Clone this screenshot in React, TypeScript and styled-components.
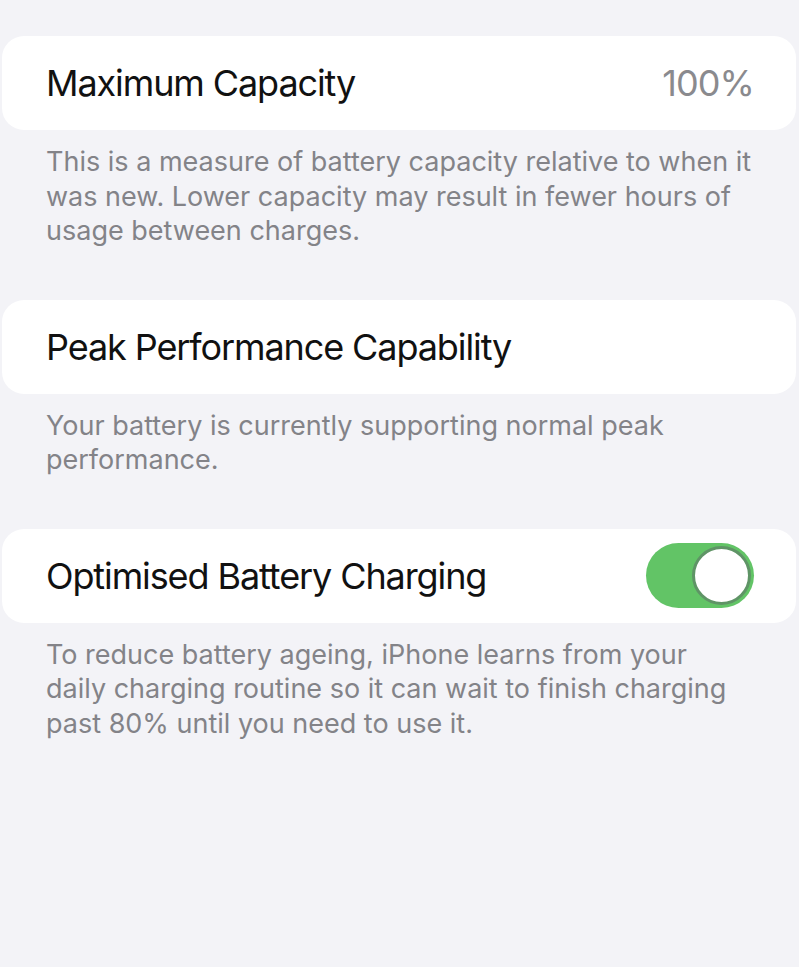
import styled, {createGlobalStyle} from "styled-components";
import {FC, ReactNode, useState} from "react";

const GlobalStyle = createGlobalStyle`
  html, body {
    margin: 0;
    padding: 0;
    background: #f3f3f7;
  }
  body {
    font-family: Inter, "Noto Sans", "Liberation Sans", sans-serif;
    -webkit-font-smoothing: antialiased;
  }
`

type SectionProps = { title: string, footer: string, children?: ReactNode }

const Section: FC<SectionProps> = ({title, footer, children}) => (
    <SectionWrapper>
        <Card>
            <Title>{title}</Title>
            {children}
        </Card>
        <Footer>{footer}</Footer>
    </SectionWrapper>
)

const Toggle: FC<{ on: boolean, onChange: (value: boolean) => void }> = ({on, onChange}) => (
    <Track on={on} onClick={() => onChange(!on)}>
        <Knob on={on}/>
    </Track>
)

export default function App() {
    const [optimised, setOptimised] = useState(true)
    return (
        <>
            <GlobalStyle/>
            <Page>
                <Section title="Maximum Capacity"
                         footer="This is a measure of battery capacity relative to when it was new. Lower capacity may result in fewer hours of usage between charges.">
                    <Value>100%</Value>
                </Section>
                <Section title="Peak Performance Capability"
                         footer="Your battery is currently supporting normal peak performance."/>
                <Section title="Optimised Battery Charging"
                         footer="To reduce battery ageing, iPhone learns from your daily charging routine so it can wait to finish charging past 80% until you need to use it.">
                    <Toggle on={optimised} onChange={setOptimised}/>
                </Section>
            </Page>
        </>
    );
}

const Page = styled.main`
  min-height: 967px;
  box-sizing: border-box;
  padding: 36px 3px 0 2px;
  display: flex;
  flex-direction: column;
  gap: 51px;
  background: #f3f3f7;
`
const SectionWrapper = styled.section`
  display: flex;
  flex-direction: column;
`
const Card = styled.div`
  height: 94px;
  box-sizing: border-box;
  display: flex;
  align-items: center;
  justify-content: space-between;
  padding: 0 42px 0 44px;
  background: #ffffff;
  border-radius: 22px;
`
const Title = styled.h3`
  margin: 0;
  font-weight: 400;
  font-size: 36px;
  letter-spacing: -1.1px;
  color: #111111;
`
const Value = styled.span`
  font-size: 36px;
  letter-spacing: -0.9px;
  color: #8a8a8e;
`
const Footer = styled.p`
  margin: 0;
  padding: 15px 44px 0 44px;
  font-size: 27px;
  line-height: 34.5px;
  color: #838388;
`
const Track = styled.div<{ on: boolean }>`
  width: 108px;
  height: 65px;
  box-sizing: border-box;
  border-radius: 33px;
  padding: 3px;
  display: flex;
  justify-content: ${p => p.on ? "flex-end" : "flex-start"};
  background: ${p => p.on ? "#62c466" : "#e5e5ea"};
  cursor: pointer;
`
const Knob = styled.span<{ on: boolean }>`
  width: 59px;
  height: 59px;
  box-sizing: border-box;
  border-radius: 50%;
  background: #ffffff;
  border: 3px solid #5f9466;
`
